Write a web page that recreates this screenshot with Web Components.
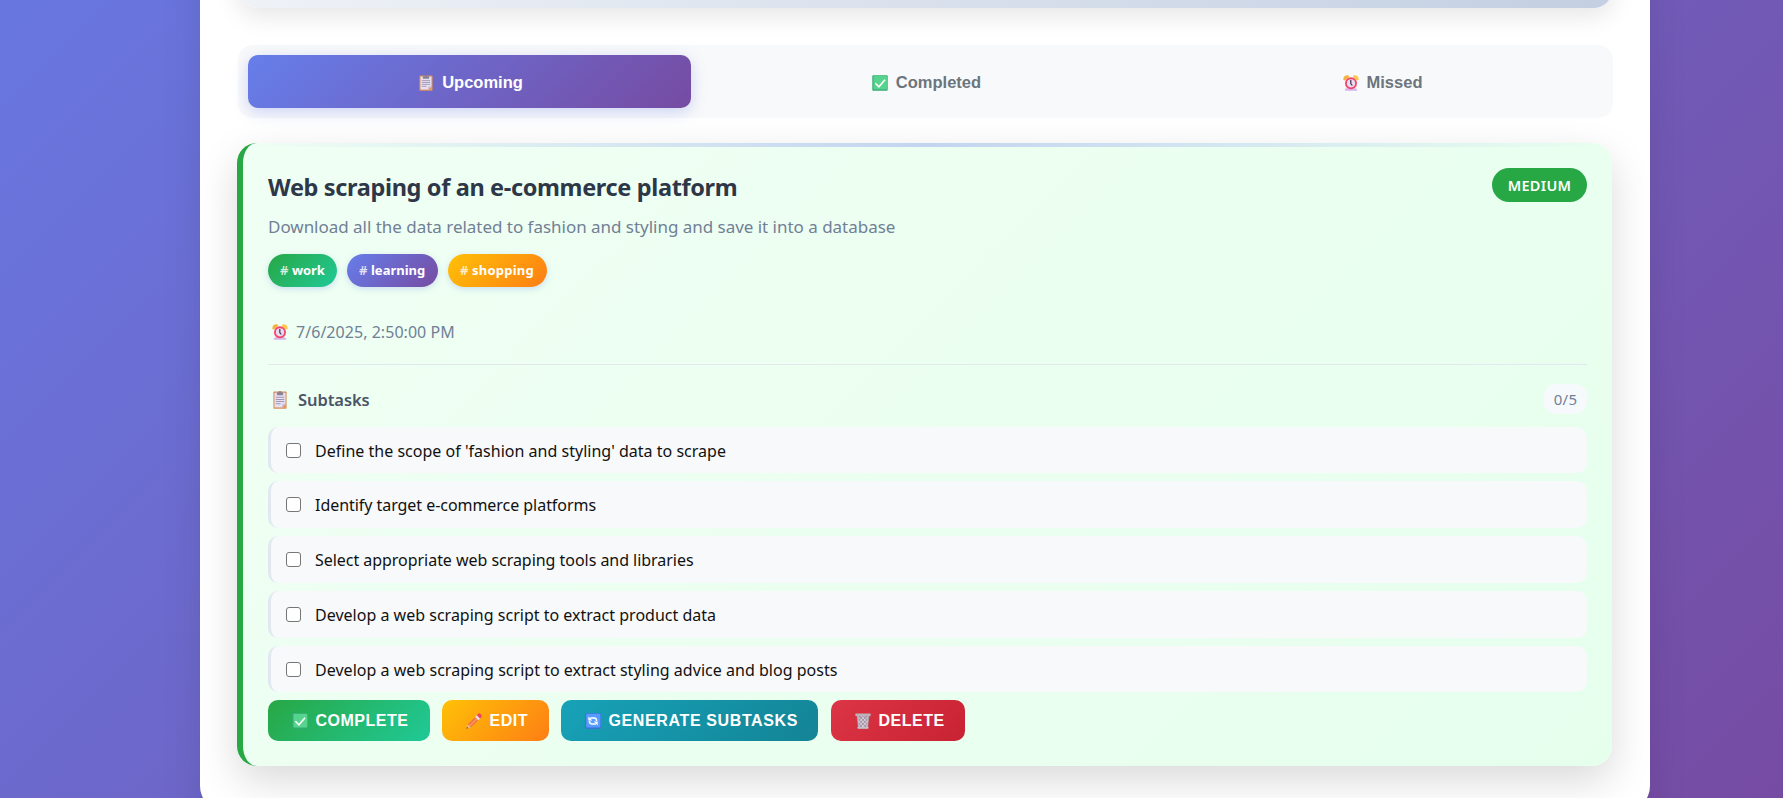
<!DOCTYPE html>
<html lang="en">
<head>
<meta charset="utf-8">
<title>Tasks</title>
<style>
  html, body { margin: 0; height: 100%; overflow: hidden; }
  body { font-family: "Noto Sans", "Open Sans", sans-serif; background: linear-gradient(135deg, #667eea 0%, #764ba2 100%) 0 -419px / 100% 1250px no-repeat; }
</style>
</head>
<body>
<task-app>
  <tab-bar>
    <tab-item icon="clipboard" active>Upcoming</tab-item>
    <tab-item icon="check">Completed</tab-item>
    <tab-item icon="alarm">Missed</tab-item>
  </tab-bar>
  <task-card>
    <span slot="title">Web scraping of an e-commerce platform</span>
    <span slot="priority">MEDIUM</span>
    <span slot="description">Download all the data related to fashion and styling and save it into a database</span>
    <tag-pill slot="tags" style="--w:69px;--from:#28a745;--to:#20c997;--ls:-.1px">work</tag-pill>
    <tag-pill slot="tags" style="--w:91px;--from:#667eea;--to:#764ba2">learning</tag-pill>
    <tag-pill slot="tags" style="--w:99px;--from:#ffc107;--to:#fd7e14;--ls:.24px">shopping</tag-pill>
    <span slot="date">7/6/2025, 2:50:00 PM</span>
    <span slot="count">0/5</span>
    <subtask-item style="letter-spacing:.015px">Define the scope of 'fashion and styling' data to scrape</subtask-item>
    <subtask-item style="letter-spacing:-.045px">Identify target e-commerce platforms</subtask-item>
    <subtask-item style="letter-spacing:-.039px">Select appropriate web scraping tools and libraries</subtask-item>
    <subtask-item style="letter-spacing:.01px">Develop a web scraping script to extract product data</subtask-item>
    <subtask-item style="letter-spacing:.026px">Develop a web scraping script to extract styling advice and blog posts</subtask-item>
    <action-button slot="actions" icon="check" style="--w:162px;--from:#28a745;--to:#20c997">COMPLETE</action-button>
    <action-button slot="actions" icon="pencil" style="--w:107px;--from:#ffc107;--to:#fd7e14">EDIT</action-button>
    <action-button slot="actions" icon="refresh" style="--w:257px;--from:#17a2b8;--to:#138496;letter-spacing:.62px">GENERATE SUBTASKS</action-button>
    <action-button slot="actions" icon="trash" style="--w:134px;--from:#dc3545;--to:#c82333;margin-left:1px">DELETE</action-button>
  </task-card>
</task-app>

<script>
const define = (name, html, init) => {
  const template = document.createElement('template');
  template.innerHTML = html;
  customElements.define(name, class extends HTMLElement {
    constructor() {
      super();
      this.attachShadow({ mode: 'open' }).append(template.content.cloneNode(true));
    }
    connectedCallback() { if (init) init(this, this.shadowRoot); }
  });
};

const ICONS = {
  clipboard: `<rect x="1.4" y=".4" width="13.2" height="15.3" rx=".7" fill="#d98f5c"/><rect x="2.5" y="1.6" width="11" height="13" fill="#e6dff0"/>
    <path d="M13.5 11.5v3.1h-3.4z" fill="#e08a4a"/><path d="M10.1 14.6v-2.4l1-.9h2.4z" fill="#c9bcdc"/>
    <path d="M4.9 1.3h1.7V.2h2.8v1.1h1.7v2.4H4.9z" fill="#8b7f94"/>
    <path d="M3.8 5.6h8.4M3.8 7.5h8.4M3.8 9.4h8.4M3.8 11.3h4.7" stroke="#a297b5" stroke-width=".9"/>`,
  check: `<rect x=".3" y=".3" width="15.4" height="15.4" rx="1" fill="#35a874"/><rect x="1.4" y=".7" width="13.9" height="13.9" rx=".8" fill="#56d38d"/>
    <path d="M3.4 8.3l3.5 3.5L13 4.7" fill="none" stroke="#fff" stroke-width="1.6"/>`,
  alarm: `<path d="M.4 5.1C-.2 2 2.5-.3 5.5.5L6.3 2 2 5.6z" fill="#f5b33d"/><path d="M15.6 5.1C16.2 2 13.5-.3 10.5.5L9.7 2 14 5.6z" fill="#ffc94a"/>
    <path d="M2.8 13.2h10.4l1.1 2.6H1.7z" fill="#d6b4ea"/><circle cx="8" cy="8.3" r="6" fill="#f4456c"/><circle cx="8" cy="8.3" r="4.1" fill="#eadbf2"/>
    <path d="M7.8 4.9v3.6l1.5 2" fill="none" stroke="#40324f" stroke-width="1.2"/>`,
  pencil: `<path d="M.4 15.8l1.5-4.6 3.2 3.1z" fill="#e8b98f"/><path d="M.4 15.8l.6-1.9 1.3 1.2z" fill="#493653"/><path d="M1.9 11.2l7.2-7.1 3.2 3.1-7.2 7.1z" fill="#f0763f"/>
    <path d="M3 12.3l7.2-7.1 1.1 1-7.2 7.2z" fill="#ff9160"/><path d="M9.1 4.1l1.8-1.8 3.2 3.1-1.8 1.8z" fill="#e8ddf1"/><path d="M10.9 2.3l1.3-1.6q1-1 2.1.1l.9.9q1.2 1.2.2 2.2l-1.3 1.5z" fill="#ee4262"/>`,
  refresh: `<rect x=".2" y=".3" width="15.6" height="15.4" rx="1" fill="#3f6bda"/><rect x="1.2" y=".7" width="14.2" height="13.9" rx=".8" fill="#569cff"/>
    <path d="M5.2 5.1h3.9q2.5 0 2.5 2.8M10.8 10.9H6.9Q4.4 10.9 4.4 8.1" fill="none" stroke="#fff" stroke-width="1.5"/>
    <path d="M3.3 3.4v4h4zM12.7 12.6V8.6h-4z" fill="#fff"/>`,
  trash: `<path d="M1.6 2.4h12.8l-1.5 13H3.1z" fill="#a596a5"/><path d="M3 3.5l9.3 10M13 3.5l-9.3 10M6.3 3l6.4 7M9.7 3l-6.4 7M2.8 7l6.5 7.5M13.2 7l-6.5 7.5" stroke="#e0d5df" stroke-width=".8"/>
    <path d="M3 3.4l1 11M13 3.4l-1 11" stroke="#c5bbc5" stroke-width="1"/><rect x=".3" y=".4" width="15.4" height="2.5" rx=".6" fill="#bdb1bb"/><rect x="2.6" y="13.8" width="10.8" height="1.9" rx=".5" fill="#c9bfca"/>`
};

define('emoji-icon', `<style>:host{display:block;flex:none;width:16px;height:16px}svg{display:block;width:100%;height:100%}</style><svg viewBox="0 0 16 16" preserveAspectRatio="none" aria-hidden="true"></svg>`,
  (el, root) => { root.querySelector('svg').innerHTML = ICONS[el.getAttribute('name')]; });

const prependIcon = (el, root) => {
  const icon = document.createElement('emoji-icon');
  icon.setAttribute('name', el.getAttribute('icon'));
  root.querySelector('button').prepend(icon);
};

define('task-app', `<style>
  :host { display: flex; padding-left: 200px; }
  main { box-sizing: border-box; width: 1450px; height: 1011px; margin-top: -200px; padding: 200px 37px 0; background: #fff; border-radius: 25px; box-shadow: 0 20px 40px rgba(0,0,0,.1); }
  .summary { height: 8px; margin: 0 0 37px 1px; display: flex; align-items: flex-end; }
  .summary div { flex: 1; height: 200px; border-radius: 20px; background: linear-gradient(135deg, #f5f7fa 0%, #c3cfe2 100%); box-shadow: 0 8px 25px rgba(0,0,0,.1); }
</style><main><div class="summary"><div></div></div><slot></slot></main>`);

define('tab-bar', `<style>
  :host { box-sizing: border-box; display: flex; gap: 13px; height: 73px; margin: 0 0 25px 1px; padding: 10px; background: #f8f9fa; border-radius: 15px; }
</style><slot></slot>`);

define('tab-item', `<style>
  :host { flex: 1; display: flex; }
  button { flex: 1; display: flex; align-items: center; justify-content: center; gap: 8px; border: 0; border-radius: 10px; padding: 2px 0 0 2px; background: transparent; color: #6c757d; font: 700 16.5px "Liberation Sans", sans-serif; }
  :host([active]) button { color: #fff; background: linear-gradient(135deg, #667eea 0%, #764ba2 100%); box-shadow: 0 4px 15px rgba(102,126,234,.3); }
</style><button><slot></slot></button>`, prependIcon);

define('task-card', `<style>
  :host { position: relative; box-sizing: border-box; display: block; width: 1375px; height: 623px; padding: 25px; border-left: 6px solid #28a745; border-radius: 20px; background: linear-gradient(135deg, #f0fff4 0%, #e6ffed 100%); box-shadow: 0 15px 40px rgba(0,0,0,.15); }
  .strip { position: absolute; inset: 0; border-radius: 14px 20px 20px 14px; overflow: hidden; }
  .strip::before { content: ""; display: block; height: 4px; background: linear-gradient(90deg, transparent, #c3d4f0, transparent); }
  .head { display: flex; justify-content: space-between; align-items: flex-start; height: 39px; }
  h3 { margin: 0; font: 700 23.5px/39px "Noto Sans", sans-serif; letter-spacing: -.35px; color: #2d3748; }
  .badge { box-sizing: border-box; width: 95px; height: 34px; border-radius: 17px; background: #28a745; color: #fff; text-align: center; font-size: 14.5px; font-weight: 600; line-height: 35px; letter-spacing: .3px; }
  p { margin: 0; height: 40px; font-size: 17px; line-height: 40px; letter-spacing: -.025px; color: #718096; }
  .tags { display: flex; gap: 10px; height: 33px; margin-top: 6.5px; }
  .date { display: flex; align-items: center; gap: 8px; height: 20px; margin-top: 35.5px; padding-left: 4px; font-size: 16px; line-height: 20px; letter-spacing: .04px; color: #718096; }
  .subs { margin-top: 22px; padding-top: 18.5px; border-top: 1px solid #e2e8f0; }
  .bar { display: flex; justify-content: space-between; height: 30.5px; margin-bottom: 12.5px; }
  h4 { display: flex; align-items: center; gap: 10px; margin: 0; padding: 2px 0 0 4px; font-size: 16.5px; font-weight: 600; letter-spacing: -.08px; color: #4a5568; }
  h4 emoji-icon { width: 16px; height: 18px; }
  .count { width: 43px; border-radius: 12px; background: #f7fafc; text-align: center; font-size: 15px; line-height: 30.5px; letter-spacing: .25px; color: #718096; }
  .list { display: flex; flex-direction: column; gap: 8px; }
  .actions { display: flex; gap: 12px; height: 41px; margin-top: 7.5px; }
</style>
<div class="strip"></div>
<div class="head"><h3><slot name="title"></slot></h3><div class="badge"><slot name="priority"></slot></div></div>
<p><slot name="description"></slot></p>
<div class="tags"><slot name="tags"></slot></div>
<div class="date"><emoji-icon name="alarm"></emoji-icon><slot name="date"></slot></div>
<section class="subs">
  <div class="bar"><h4><emoji-icon name="clipboard"></emoji-icon>Subtasks</h4><div class="count"><slot name="count"></slot></div></div>
  <div class="list"><slot></slot></div>
</section>
<div class="actions"><slot name="actions"></slot></div>`);

define('tag-pill', `<style>
  :host { box-sizing: border-box; display: flex; align-items: center; width: var(--w); padding-left: 12px; border-radius: 17px; background: linear-gradient(135deg, var(--from), var(--to)); box-shadow: 0 2px 6px rgba(102,126,234,.25); color: #fff; font-size: 13px; font-weight: 700; letter-spacing: var(--ls, 0); }
  i { width: 12px; font-style: normal; font-weight: 600; opacity: .8; }
</style><i>#</i><slot></slot>`);

define('subtask-item', `<style>
  :host { box-sizing: border-box; display: flex; align-items: center; height: 46.8px; padding: 1.6px 0 0 15px; border-left: 3px solid #e2e8f0; border-radius: 10px; background: #f8f9fa; color: #111; font-size: 16px; }
  input { appearance: none; box-sizing: border-box; flex: none; width: 15px; height: 15px; margin: 0 14px 1.2px 0; border: 1px solid #767676; border-radius: 3px; background: #fff; }
</style><input type="checkbox"><slot></slot>`);

define('action-button', `<style>
  :host { display: flex; width: var(--w); letter-spacing: .51px; }
  button { flex: 1; display: flex; align-items: center; gap: 8px; padding: 2px 0 0 23.5px; border: 0; border-radius: 10px; background: linear-gradient(135deg, var(--from), var(--to)); color: #fff; font: 700 16px "Liberation Sans", sans-serif; letter-spacing: inherit; white-space: nowrap; }
</style><button><slot></slot></button>`, prependIcon);
</script>
</body>
</html>
